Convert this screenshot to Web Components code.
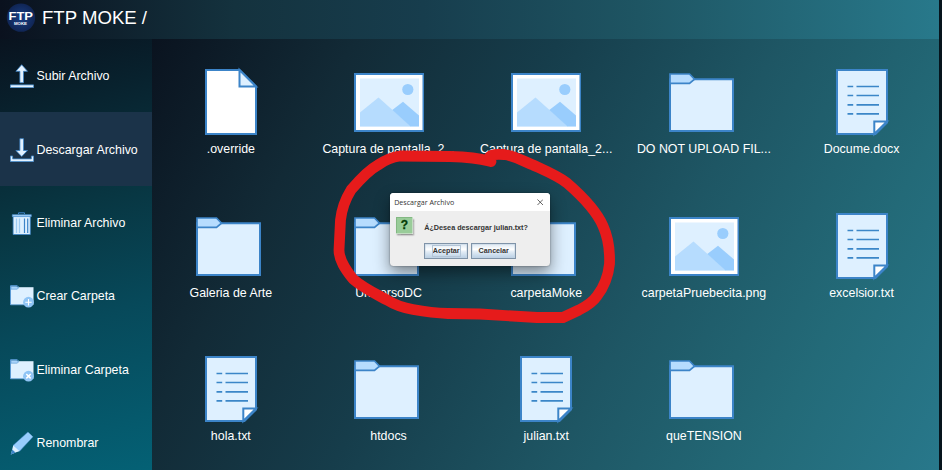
<!DOCTYPE html>
<html lang="es">
<head>
<meta charset="utf-8">
<title>FTP MOKE</title>
<style>
html,body{margin:0;height:100%;overflow:hidden;background:#06141c}
body{font-family:"Liberation Sans",Arial,sans-serif;color:#fff}
</style>
</head>
<body>
<ftp-app></ftp-app>
<script>
const define = (name, html, setup) => customElements.define(name, class extends HTMLElement {
  constructor() {
    super();
    const t = document.createElement('template');
    t.innerHTML = html;
    this.attachShadow({mode: 'open'}).append(t.content.cloneNode(true));
  }
  connectedCallback() { if (setup) setup(this, this.shadowRoot); }
});

const S = '#3c84c8';
const FOLDER = `<g stroke="${S}" stroke-width="2"><path fill="#def0ff" d="M1 12.200H64V64H1z"/><path fill="#b6dcfe" stroke-width="1.700" d="M1 7H20.500L25.500 12.200L20.500 16.300H1z"/></g>`;
const FILE_ICONS = {
  blank: `<path fill="#fff" stroke="${S}" stroke-width="2" d="M10 3H43.500L60 19.500V67H10z"/><path fill="#def0ff" stroke="${S}" stroke-width="2" d="M43.500 3V19.500H60z"/>`,
  image: `<path fill="#fff" stroke="${S}" stroke-width="2" d="M1 7H69.500V64H1z"/><path fill="#def0ff" d="M6 11.500H65V59.500H6z"/><circle cx="53.800" cy="22.500" r="5.600" fill="#99cdfd"/><path fill="#b6dcfe" d="M6 45.500L24.500 30.500L57 59.500H6z"/><path fill="#99cdfd" d="M38.300 43L49 34.700L65 48.500V59.500H56.500z"/>`,
  folder: FOLDER,
  text: `<path fill="#def0ff" stroke="${S}" stroke-width="2" d="M10 3H60V55.500L48.500 67H10z"/><path fill="#fff" stroke="${S}" stroke-width="2" d="M47.300 67V54.500H60z"/><path stroke="#3b86c8" stroke-width="1.700" d="M20.500 19.500H26.200M29.500 19.500H52M20.500 28.500H26.200M29.500 28.500H52M20.500 37.800H26.200M29.500 37.800H52M20.500 46.800H26.200M29.500 46.800H52"/>`
};
const SMALL_FOLDER = `<path fill="#def0ff" d="M.500 3.200H23.500V20.800H.500z"/><path d="M.500 21V1.700H7L9 3.300" fill="none" stroke="#5a9ad4"/><path d="M1 2.200H6.500L8.500 4L7 5.200H1z" fill="#a9d3fa" stroke="#5a9ad4" stroke-width=".6"/><path d="M.500 20.800H14" stroke="#5a9ad4" stroke-width=".8"/><circle cx="18.500" cy="18.200" r="5.400" fill="#8fc4f5"/>`;
const ACTION_ICONS = {
  up: `<path d="M11.700 .700L17.500 7.300H13.500V18.700H9.900V7.300H5.900z" fill="#e3f2ff" stroke="#3c84c8" stroke-width=".8"/><path d="M.400 20.900H23.600V23.600H.400z" fill="#e3f2ff" stroke="#4a90d0" stroke-width=".8"/>`,
  down: `<path d="M9.900 .700H13.500V12.500H17.500L11.700 18.500L5.900 12.500H9.900z" fill="#e3f2ff" stroke="#3c84c8" stroke-width=".8"/><path d="M.400 18H2.600V20.900H21.400V18H23.600V23.500H.400z" fill="#e3f2ff" stroke="#4a90d0" stroke-width=".8"/>`,
  trash: `<path d="M8.500 3V1.800H14.500V3" fill="none" stroke="#3c84c8"/><path d="M3.100 5H20.300V23.500H3.100z" fill="#def0ff" stroke="#3c84c8" stroke-width=".8"/><path d="M2.300 3.700H21.300V5.600H2.300z" fill="#a9d3fa" stroke="#4a90d0" stroke-width=".7"/><path d="M6.500 7.500V22M9.500 7.500V22" stroke="#9fccf4" stroke-width="1.300"/><path d="M14.500 7.500V22M17.700 7.500V22" stroke="#3c84c8" stroke-width="1.200"/>`,
  add: SMALL_FOLDER + `<path d="M15.300 18.200H21.700M18.500 15V21.400" stroke="#fff" stroke-width="1.100"/>`,
  remove: SMALL_FOLDER + `<path d="M16.300 16L20.700 20.400M20.700 16L16.300 20.400" stroke="#fff" stroke-width="1.500"/>`,
  pencil: `<path d="M3 14.500L18 .900L23 5.800L9.500 20.300L4 21z" fill="#99cdfd"/><path d="M3.200 14.500L9.300 20L.900 23.600z" fill="#def0ff"/><path d="M2.300 18.500L5.500 21.500L.500 23.800z" fill="#3c84c8"/><path d="M3 14.500L18 .900M9.500 20.300L23 5.800" stroke="#4a90d0" stroke-width=".5"/>`
};

define('file-tile', `<style>
:host{display:flex;flex-direction:column;align-items:center;padding-top:28px;box-sizing:border-box;min-width:0}
svg{width:70px;height:70px;display:block;flex:none}
.l{font-size:12.400px;line-height:16px;margin-top:4px;white-space:nowrap}
</style><svg viewBox="0 0 70 70" fill="none"></svg><div class="l"><slot></slot></div>`,
(el, r) => { r.querySelector('svg').innerHTML = FILE_ICONS[el.getAttribute('kind')]; });

define('action-item', `<style>
:host{display:flex;align-items:center;height:73.4px;flex:none;padding:1px 0 0 10px;gap:2.500px;font-size:12.400px;box-sizing:border-box;white-space:nowrap}
:host([selected]){background:#1b3349}
svg{width:24px;height:24px;flex:none}
</style><svg viewBox="0 0 24 24" fill="none"></svg><span><slot></slot></span>`,
(el, r) => { r.querySelector('svg').innerHTML = ACTION_ICONS[el.getAttribute('icon')]; });

define('app-header', `<style>
:host{display:flex;align-items:center;height:39px;box-sizing:border-box;padding:0 0 4px 6px;gap:6px;background:linear-gradient(90deg,#0a111e 0%,#14323e 25%,#173d4d 45%,#1e5563 68%,#28798b 100%);font-size:18.600px}
svg{width:30px;height:30px}
</style><svg viewBox="0 0 30 30"><defs><radialGradient id="g"><stop offset="0" stop-color="#193f86"/><stop offset="1" stop-color="#102554"/></radialGradient></defs><circle cx="15" cy="14.600" r="14.200" fill="url(#g)"/>
<text x="2.500" y="17" font-size="11" font-weight="bold" fill="#fff" textLength="24.500" lengthAdjust="spacingAndGlyphs">FTP</text>
<text x="8" y="22" font-size="3.800" font-weight="bold" fill="#fff" textLength="13" lengthAdjust="spacingAndGlyphs">MOKE</text></svg><span><slot></slot></span>`);

define('metal-button', `<style>
:host{display:flex;align-items:center;justify-content:center;width:44.500px;height:16px;box-sizing:border-box;border:1px solid #7f93a8;background:linear-gradient(#dce7f2 0%,#fff 38%,#e3ecf5 55%,#b8cfe5 100%);color:#333;font-weight:bold;font-size:7.200px;line-height:10px;box-shadow:inset 0 0 0 .5px #c4d3e2}
:host([focused]) span{outline:1px solid #b3c5d7;outline-offset:0}
</style><span><slot></slot></span>`);

define('confirm-dialog', `<style>
:host{display:flex;flex-direction:column;width:160.300px;height:72.700px;border-radius:3.500px;background:#eee;color:#333;overflow:visible;box-shadow:0 7px 16px rgba(0,0,0,.45),0 0 2px rgba(0,0,0,.45)}
header{display:flex;align-items:center;justify-content:space-between;height:18px;flex:none;background:#fff;border-radius:3.500px 3.500px 0 0;padding:0 6.500px 0 4.500px;font:7.100px "Open Sans","Noto Sans",sans-serif;color:#333}
header svg{width:6.500px;height:6.500px}
.body{display:grid;grid-template-columns:16.500px 1fr;column-gap:11.500px;padding:6px 6px 0 6.500px}
.q{width:16.500px;height:16.500px;box-shadow:1px 1.500px 1.500px #9a9a9a}
.m{font-weight:bold;font-size:7.240px;line-height:10px;padding-top:5.500px;white-space:nowrap}
.b{display:flex;gap:3px;padding:8.800px 0 0 34.300px}
</style><header><span><slot name="title"></slot></span><svg viewBox="0 0 7 7"><path d="M.500 .500L6.500 6.500M6.500 .500L.500 6.500" stroke="#333" stroke-width=".8"/></svg></header>
<div class="body"><svg class="q" viewBox="0 0 16.500 16.500"><path d="M0 0H16.500V16.500H0z" fill="#99cc99"/><path d="M.400 16V.400H16" stroke="#7bb07b" stroke-width=".8" fill="none"/><text x="8.300" y="12.400" text-anchor="middle" font-size="12" font-weight="bold" fill="#053c05" stroke="#053c05" stroke-width=".3">?</text></svg><div class="m"><slot></slot></div></div>
<div class="b"><metal-button focused>Aceptar</metal-button><metal-button>Cancelar</metal-button></div>`);

define('ink-ring', `<style>
:host{display:block;width:300px;height:190px}svg{display:block}
</style><svg width="300" height="190" viewBox="325 140 300 190" fill="none" stroke="#e61b1b" stroke-linecap="round" stroke-linejoin="round">
<path stroke-width="10.800" d="M491 161.500L489 161C478 158 465 157 450 156.500L400 156C393 157 385 160 378 165C367 171 357 183 351 190C346 198 342 207 340.500 220L339 250C339 260 345 269 353 279C363 288 376 294 387 300C395 305 404 308 413 309.500C424 311.500 434 313 448 313.500L480 314L537 317.500L563 317.500L579 310C587 306 593 302 597 296C604 287 608 278 609.500 264C610 250 608 237 603 226C597 212 582 196 567 183C558 176 546 171 533 165C523 161 515 156 504 154.500C497 154 491 154 488.500 158"/></svg>`);

define('ftp-app', `<style>
:host{position:relative;display:grid;grid-template:39px 1fr/152px 787px;width:942px;height:470px;overflow:hidden;box-sizing:border-box}
app-header{grid-column:1/3}
nav{display:flex;flex-direction:column;overflow:hidden;background:linear-gradient(163deg,#09131f 0%,#08222e 17%,#083642 40%,#07495a 64%,#046175 100%)}
main{display:grid;grid-template-columns:repeat(5,157.700px);grid-template-rows:repeat(3,143.670px);overflow:hidden;background:linear-gradient(118deg,#0a131f 0%,#122a36 20%,#163d4b 40%,#1e5664 62%,#236a78 82%,#28788b 100%)}
confirm-dialog{position:absolute;left:389.700px;top:193.300px}
ink-ring{position:absolute;left:325px;top:140px}
</style>
<app-header>FTP MOKE /</app-header>
<nav>
<action-item icon="up">Subir Archivo</action-item>
<action-item icon="down" selected>Descargar Archivo</action-item>
<action-item icon="trash">Eliminar Archivo</action-item>
<action-item icon="add">Crear Carpeta</action-item>
<action-item icon="remove">Eliminar Carpeta</action-item>
<action-item icon="pencil">Renombrar</action-item>
</nav>
<main>
<file-tile kind="blank">.override</file-tile>
<file-tile kind="image">Captura de pantalla_2...</file-tile>
<file-tile kind="image">Captura de pantalla_2...</file-tile>
<file-tile kind="folder">DO NOT UPLOAD FIL...</file-tile>
<file-tile kind="text">Docume.docx</file-tile>
<file-tile kind="folder">Galeria de Arte</file-tile>
<file-tile kind="folder">UniversoDC</file-tile>
<file-tile kind="folder">carpetaMoke</file-tile>
<file-tile kind="image">carpetaPruebecita.png</file-tile>
<file-tile kind="text">excelsior.txt</file-tile>
<file-tile kind="text">hola.txt</file-tile>
<file-tile kind="folder">htdocs</file-tile>
<file-tile kind="text">julian.txt</file-tile>
<file-tile kind="folder">queTENSION</file-tile>
</main>
<confirm-dialog><span slot="title">Descargar Archivo</span>Á¿Desea descargar julian.txt?</confirm-dialog>
<ink-ring></ink-ring>`);
</script>
</body>
</html>
